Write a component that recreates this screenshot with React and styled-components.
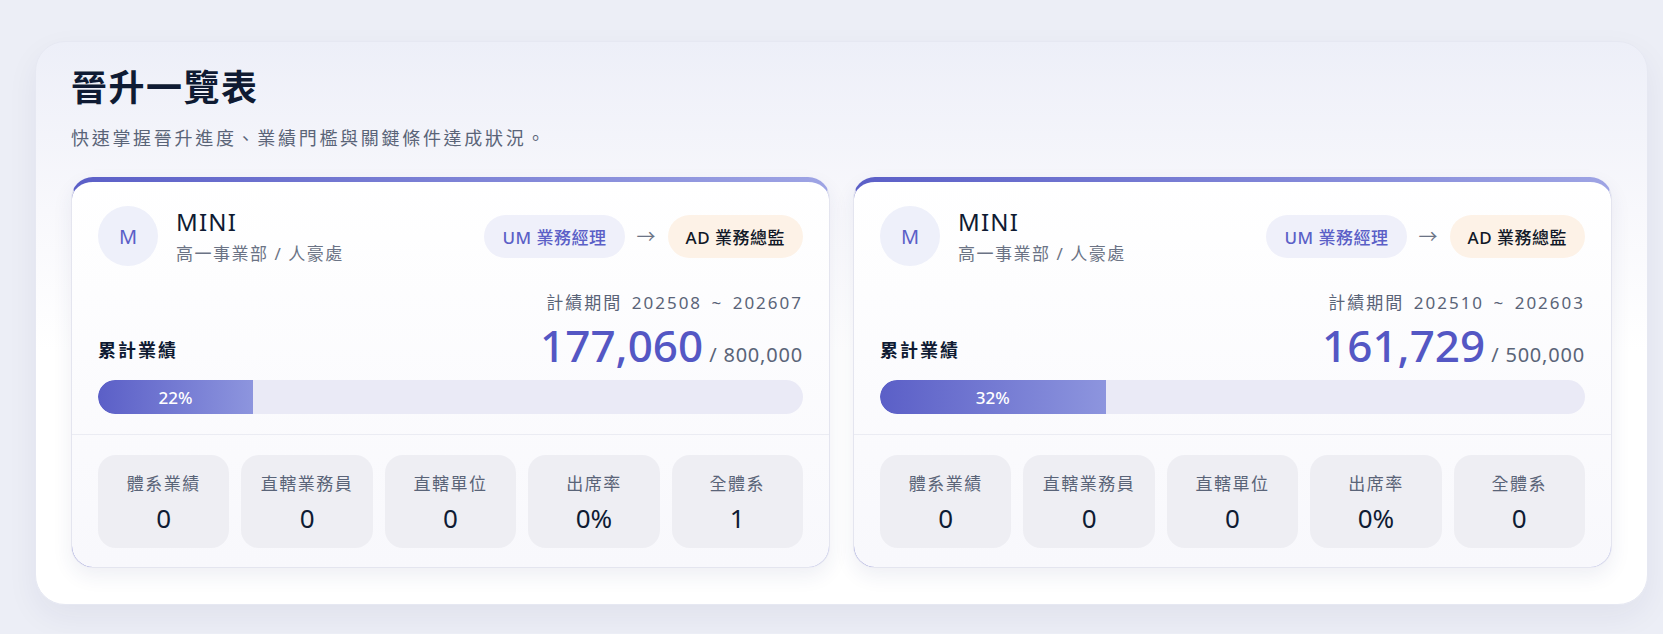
import React from 'react';
import styled, { createGlobalStyle } from 'styled-components';

const GlobalStyle = createGlobalStyle`
  * { box-sizing: border-box; }
  body {
    margin: 0;
    background: #eceef6;
    font-family: "Noto Sans", "Noto Sans CJK TC", sans-serif;
    color: #0f1b33;
  }
`;

const cards = [
  {
    initial: 'M',
    name: 'MINI',
    unit: '高一事業部 / 人豪處',
    from: 'UM 業務經理',
    to: 'AD 業務總監',
    period: '計績期間 202508 ~ 202607',
    amount: '177,060',
    target: '800,000',
    percent: 22,
    stats: [
      ['體系業績', '0'],
      ['直轄業務員', '0'],
      ['直轄單位', '0'],
      ['出席率', '0%'],
      ['全體系', '1'],
    ],
  },
  {
    initial: 'M',
    name: 'MINI',
    unit: '高一事業部 / 人豪處',
    from: 'UM 業務經理',
    to: 'AD 業務總監',
    period: '計績期間 202510 ~ 202603',
    amount: '161,729',
    target: '500,000',
    percent: 32,
    stats: [
      ['體系業績', '0'],
      ['直轄業務員', '0'],
      ['直轄單位', '0'],
      ['出席率', '0%'],
      ['全體系', '0'],
    ],
  },
];

export default function App() {
  return (
    <>
      <GlobalStyle />
      <Page>
        <Panel>
          <Title>晉升一覽表</Title>
          <Subtitle>快速掌握晉升進度、業績門檻與關鍵條件達成狀況。</Subtitle>
          <CardGrid>
            {cards.map((c, i) => (
              <Card key={i}>
                <TopSection>
                  <Header>
                    <Avatar>{c.initial}</Avatar>
                    <Who>
                      <Name>{c.name}</Name>
                      <Unit>{c.unit}</Unit>
                    </Who>
                    <Ranks>
                      <Pill>{c.from}</Pill>
                      <Arrow>→</Arrow>
                      <Pill target>{c.to}</Pill>
                    </Ranks>
                  </Header>
                  <Period>{c.period}</Period>
                  <AmountRow>
                    <AmountLabel>累計業績</AmountLabel>
                    <Amount>
                      <Big>{c.amount}</Big>
                      <Goal>/ {c.target}</Goal>
                    </Amount>
                  </AmountRow>
                  <Track>
                    <Fill style={{ width: `${c.percent}%` }}>{c.percent}%</Fill>
                  </Track>
                </TopSection>
                <Stats>
                  {c.stats.map(([label, value]) => (
                    <Tile key={label}>
                      <TileLabel>{label}</TileLabel>
                      <TileValue>{value}</TileValue>
                    </Tile>
                  ))}
                </Stats>
              </Card>
            ))}
          </CardGrid>
        </Panel>
      </Page>
    </>
  );
}

const Page = styled.div`
  padding: 41px 15px 28px 35px;
`;

const Panel = styled.section`
  background: linear-gradient(180deg, #edeff8 0%, #f8f8fc 30%, #ffffff 55%, #ffffff 100%);
  border: 1px solid #e6e8f2;
  border-radius: 30px;
  padding: 24px 35px 36px;
  box-shadow: 0 12px 32px rgba(30, 40, 90, 0.06);
`;

const Title = styled.h1`
  margin: 0;
  font-size: 36px;
  line-height: 44px;
  font-weight: 700;
  color: #0f1b33;
  letter-spacing: 1.5px;
`;

const Subtitle = styled.p`
  margin: 15px 0 0;
  font-size: 18px;
  line-height: 26px;
  color: #5a6478;
  letter-spacing: 2.7px;
`;

const CardGrid = styled.div`
  margin-top: 26px;
  display: grid;
  grid-template-columns: 1fr 1fr;
  gap: 23px;
`;

const Card = styled.article`
  border-radius: 22px;
  border: 1px solid #e4e5ef;
  border-top: 5px solid transparent;
  background:
    linear-gradient(180deg, #ffffff 0%, #f8f8fc 100%) padding-box,
    linear-gradient(90deg, #5b5fc7 0%, #9ea4e4 100%) border-box;
  box-shadow: 0 8px 20px rgba(40, 50, 110, 0.08);
  overflow: hidden;
`;

const TopSection = styled.div`
  padding: 24px 26px 20px;
  border-bottom: 1px solid #ebecf3;
`;

const Header = styled.div`
  display: flex;
  align-items: center;
`;

const Avatar = styled.div`
  width: 60px;
  height: 60px;
  border-radius: 50%;
  background: #eef0fa;
  color: #5b5fc7;
  font-size: 20px;
  display: flex;
  align-items: center;
  justify-content: center;
  flex-shrink: 0;
`;

const Who = styled.div`
  margin-left: 18px;
  display: flex;
  flex-direction: column;
`;

const Name = styled.div`
  font-size: 24px;
  line-height: 30px;
  letter-spacing: 1.2px;
  color: #0f1b33;
`;

const Unit = styled.div`
  font-size: 17px;
  line-height: 24px;
  margin-top: 5px;
  color: #6b7385;
  letter-spacing: 1.5px;
`;

const Ranks = styled.div`
  margin-left: auto;
  display: flex;
  align-items: center;
  gap: 12px;
`;

const Pill = styled.span`
  height: 43px;
  padding: 0 18px;
  border-radius: 22px;
  display: inline-flex;
  align-items: center;
  font-size: 17px;
  font-weight: 500;
  letter-spacing: 0.5px;
  background: ${p => (p.target ? '#fdf2e7' : '#eff0fa')};
  color: ${p => (p.target ? '#111827' : '#5b5fc7')};
`;

const Arrow = styled.span`
  font-size: 19px;
  color: #6b7385;
`;

const Period = styled.div`
  margin-top: 26px;
  text-align: right;
  font-size: 17px;
  line-height: 22px;
  color: #5a6478;
  letter-spacing: 2px;
  word-spacing: 3px;
`;

const AmountRow = styled.div`
  margin-top: 4px;
  display: flex;
  align-items: center;
  justify-content: space-between;
`;

const AmountLabel = styled.div`
  font-size: 18px;
  font-weight: 600;
  color: #0f1b33;
  letter-spacing: 2px;
  padding-top: 8px;
`;

const Amount = styled.div`
  display: flex;
  align-items: baseline;
  gap: 6px;
`;

const Big = styled.span`
  font-size: 44px;
  line-height: 54px;
  font-weight: 500;
  color: #5457c4;
`;

const Goal = styled.span`
  font-size: 20px;
  color: #5a6478;
  letter-spacing: 0.8px;
`;

const Track = styled.div`
  margin-top: 8px;
  height: 34px;
  border-radius: 17px;
  background: #eaeaf6;
  overflow: hidden;
`;

const Fill = styled.div`
  height: 100%;
  border-radius: 17px 0 0 17px;
  background: linear-gradient(90deg, #5b5fc7 0%, #8d95de 100%);
  color: #ffffff;
  font-size: 17px;
  font-weight: 500;
  display: flex;
  align-items: center;
  justify-content: center;
`;

const Stats = styled.div`
  padding: 20px 26px 19px;
  display: grid;
  grid-template-columns: repeat(5, 1fr);
  gap: 12px;
`;

const Tile = styled.div`
  height: 93px;
  border-radius: 18px;
  background: #eeeef3;
  display: flex;
  flex-direction: column;
  align-items: center;
  padding-top: 17px;
`;

const TileLabel = styled.div`
  font-size: 17px;
  line-height: 24px;
  color: #5a6478;
  letter-spacing: 1.5px;
`;

const TileValue = styled.div`
  margin-top: 6px;
  font-size: 26px;
  line-height: 32px;
  color: #0f1b33;
`;
